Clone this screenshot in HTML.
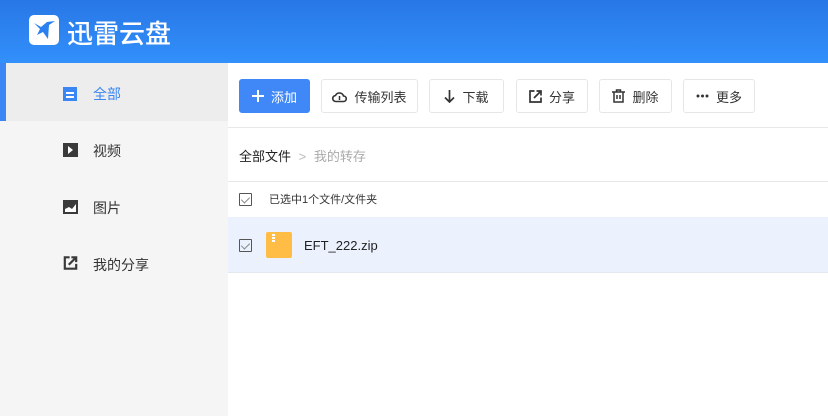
<!DOCTYPE html>
<html><head><meta charset="utf-8"><style>
*{margin:0;padding:0;box-sizing:border-box}
body{width:828px;height:416px;overflow:hidden;font-family:"Liberation Sans","Noto Sans CJK SC",sans-serif;background:#fff;position:relative}
.hdr{position:absolute;left:0;top:0;width:828px;height:63px;background:linear-gradient(180deg,#2877e6,#3290fb)}
.logo{position:absolute;left:29px;top:15px;width:30px;height:30px;background:#fff;border-radius:5px}
.title{position:absolute;left:67px;top:14px;color:#fff;font-size:26px;font-weight:500}
.side{position:absolute;left:0;top:63px;width:228px;height:353px;background:#f5f5f5}
.act{position:absolute;left:0;top:0;width:228px;height:58px;background:#ededed;border-left:6px solid #3a86f5}
.item{position:absolute;left:93px;font-size:14px;color:#333}
.ic{position:absolute;left:63px;width:15px;height:14px}
.btn{position:absolute;top:79px;height:34px;border:1px solid #e6e6e6;border-radius:3px;font-size:13px;color:#333;display:flex;align-items:center;justify-content:center;gap:7px;background:#fff}
.line{position:absolute;left:228px;width:600px;height:1px;background:#e8e8e8}
.cb{position:absolute;left:239px;width:13px;height:13px;border:1px solid #555;border-radius:1px}
.cb:after{content:"";position:absolute;left:3px;top:1px;width:4px;height:7px;border:solid #888;border-width:0 1px 1px 0;transform:rotate(45deg)}
</style></head><body>
<div class="hdr">
<div class="logo"><svg width="30" height="30" viewBox="0 0 30 30"><path d="M5 8 L12 12 L18 7 L26 6 L20 10 L19 24 L14 17 L8 20 L11 14 Z" fill="#2a80ee"/></svg></div>
<div class="title">迅雷云盘</div>
</div>
<div class="side">
<div class="act"></div>
<div class="ic" style="top:24px;background:#3a86f5;width:14px"><div style="position:absolute;left:3px;top:5px;width:8px;height:1.5px;background:#fff"></div><div style="position:absolute;left:3px;top:9px;width:8px;height:1.5px;background:#fff"></div></div>
<div class="item" style="top:21px;color:#3a86f5">全部</div>
<div class="ic" style="top:80px;background:#3a3a3a"><div style="position:absolute;left:5px;top:3px;border-left:5px solid #fff;border-top:4px solid transparent;border-bottom:4px solid transparent"></div></div>
<div class="item" style="top:78px">视频</div>
<div class="ic" style="top:137px;background:#3a3a3a"><svg width="15" height="14" style="position:absolute;left:0;top:0"><path d="M2 12 L2 9 L6 7 L9 9 L13 4 L13 12 Z" fill="#fff"/></svg></div>
<div class="item" style="top:135px">图片</div>
<svg class="ic" style="top:193px" width="16" height="16" viewBox="0 0 16 16"><path d="M7 1.5H1.5V14.5H14.5V9" fill="none" stroke="#3a3a3a" stroke-width="2.5"/><path d="M6 10L14 2M9 1.5H14.5V7" fill="none" stroke="#3a3a3a" stroke-width="2.5"/></svg>
<div class="item" style="top:192px">我的分享</div>
</div>
<div class="btn" style="left:239px;width:71px;background:#4088f7;border-color:#4088f7;color:#fff"><svg width="12" height="12"><path d="M6 0V12M0 6H12" stroke="#fff" stroke-width="2"/></svg>添加</div>
<div class="btn" style="left:321px;width:97px"><svg width="15" height="13" viewBox="0 0 15 13"><path d="M4 11.5H11.5A2.7 2.7 0 0 0 11.5 6 A4.3 4.3 0 0 0 3.5 5.5 A3 3 0 0 0 4 11.5Z" fill="none" stroke="#333" stroke-width="1.6"/><path d="M7.5 6V10" stroke="#333" stroke-width="1.5"/></svg>传输列表</div>
<div class="btn" style="left:429px;width:75px"><svg width="11" height="13"><path d="M5.5 0V12M1 7.5L5.5 12L10 7.5" fill="none" stroke="#333" stroke-width="1.7"/></svg>下载</div>
<div class="btn" style="left:516px;width:72px"><svg width="13" height="13" viewBox="0 0 13 13"><path d="M5.5 1H1V12H12V7.5" fill="none" stroke="#333" stroke-width="1.7"/><path d="M5 8L12 1M7.5 1H12V5.5" fill="none" stroke="#333" stroke-width="1.7"/></svg>分享</div>
<div class="btn" style="left:599px;width:73px"><svg width="13" height="14" viewBox="0 0 13 14"><path d="M0 3H13M4.5 3V1H8.5V3M2 3V13H11V3M5 6V10M8 6V10" fill="none" stroke="#333" stroke-width="1.5"/></svg>删除</div>
<div class="btn" style="left:683px;width:72px"><svg width="13" height="4"><circle cx="2" cy="2" r="1.5" fill="#333"/><circle cx="6.5" cy="2" r="1.5" fill="#333"/><circle cx="11" cy="2" r="1.5" fill="#333"/></svg>更多</div>
<div class="line" style="top:127px"></div>
<div style="position:absolute;left:239px;top:146px;font-size:13px;color:#222">全部文件 <span style="color:#bbb;margin:0 4px">&gt;</span> <span style="color:#aaa">我的转存</span></div>
<div class="line" style="top:181px"></div>
<div class="cb" style="top:193px"></div>
<div style="position:absolute;left:269px;top:191px;font-size:11px;color:#333">已选中1个文件/文件夹</div>
<div style="position:absolute;left:228px;top:217px;width:600px;height:56px;background:#ebf2fd;border-bottom:1px solid #e3e8f0"></div>
<div class="cb" style="top:239px"></div>
<div style="position:absolute;left:266px;top:232px;width:26px;height:26px;background:#ffbd46;border-radius:2px"><div style="position:absolute;left:6px;top:2px;width:3px;height:9px;background:repeating-linear-gradient(#fff 0 2px,transparent 2px 3px)"></div></div>
<div style="position:absolute;left:304px;top:238px;font-size:13px;color:#222">EFT_222.zip</div>
</body></html>
